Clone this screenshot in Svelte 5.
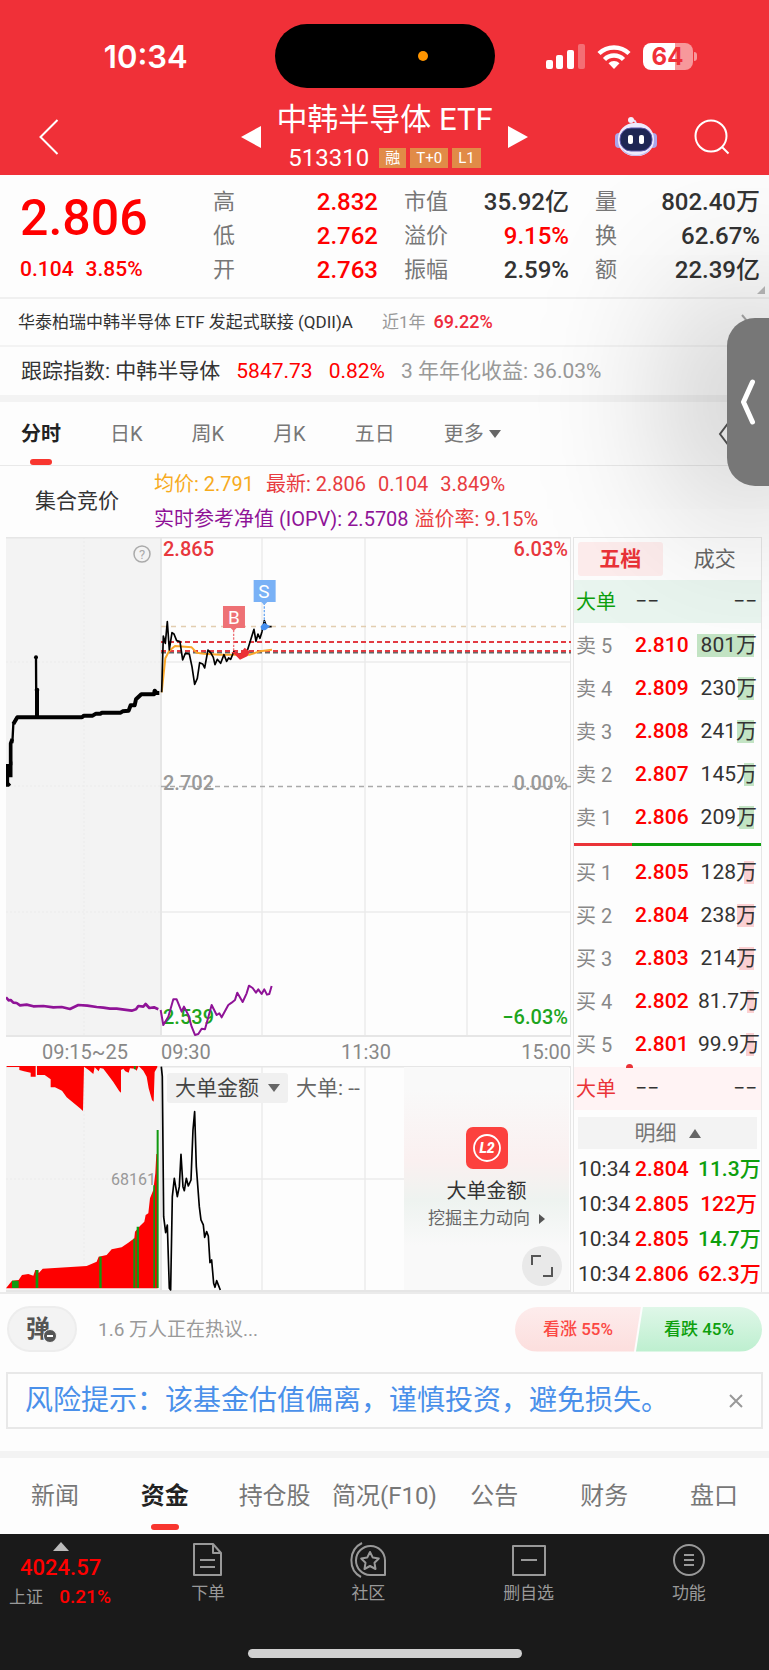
<script>
  const stats = [
    ['高', '2.832', true], ['市值', '35.92亿', false], ['量', '802.40万', false],
    ['低', '2.762', true], ['溢价', '9.15%', true], ['换', '62.67%', false],
    ['开', '2.763', true], ['振幅', '2.59%', false], ['额', '22.39亿', false],
  ]

  const periods = ['分时', '日K', '周K', '月K', '五日']

  // label, price, amount, bar width in px
  const sells = [
    ['卖 5', '2.810', '801万', 57],
    ['卖 4', '2.809', '230万', 16],
    ['卖 3', '2.808', '241万', 17],
    ['卖 2', '2.807', '145万', 10],
    ['卖 1', '2.806', '209万', 15],
  ]
  const buys = [
    ['买 1', '2.805', '128万', 10],
    ['买 2', '2.804', '238万', 17],
    ['买 3', '2.803', '214万', 15],
    ['买 4', '2.802', '81.7万', 7],
    ['买 5', '2.801', '99.9万', 8],
  ]
  const trades = [
    ['10:34', '2.804', '11.3万', 'down'],
    ['10:34', '2.805', '122万', 'up'],
    ['10:34', '2.805', '14.7万', 'down'],
    ['10:34', '2.806', '62.3万', 'up'],
  ]

  const sections = ['新闻', '资金', '持仓股', '简况(F10)', '公告', '财务', '盘口']

  let period = $state('分时')
  let section = $state('资金')
  let book = $state('五档')
  let showRisk = $state(true)
</script>

<div class="page">
  <header>
    <div class="status">
      <span class="clock">10:34</span>
      <div class="island"><i></i></div>
      <div class="signals">
        <svg width="39" height="26" viewBox="0 0 39 26" fill="#fff" aria-hidden="true">
          <rect x="0" y="17" width="7" height="9" rx="2" />
          <rect x="10" y="12" width="7" height="14" rx="2" />
          <rect x="21" y="7" width="7" height="19" rx="2" />
          <rect x="32" y="1" width="7" height="25" rx="2" opacity=".3" />
        </svg>
        <svg width="34" height="25" viewBox="0 0 34 25" fill="none" stroke="#fff" stroke-width="4.5" aria-hidden="true">
          <path d="M2 9.500a21.500 21.500 0 0 1 30 0" />
          <path d="M7.500 15.500a13.500 13.500 0 0 1 19 0" />
          <path d="M17 25l-5.500-5.800a8 8 0 0 1 11 0z" fill="#fff" stroke="none" />
        </svg>
        <div class="battery"><span>64</span></div>
      </div>
    </div>
    <div class="titlebar">
      <button class="back" aria-label="返回">
        <svg width="20" height="36" viewBox="0 0 20 36" fill="none" stroke="#fff" stroke-width="2"><path d="M18.500 1L1.500 18l17 17" /></svg>
      </button>
      <div class="title">
        <button aria-label="上一个"><svg width="20" height="22" viewBox="0 0 20 22"><path d="M20 0v22L0 11z" fill="#fff" /></svg></button>
        <div class="names">
          <h1>中韩半导体 ETF</h1>
          <div class="code">513310 <em>融</em><em>T+0</em><em>L1</em></div>
        </div>
        <button aria-label="下一个"><svg width="20" height="22" viewBox="0 0 20 22"><path d="M0 0v22l20-11z" fill="#fff" /></svg></button>
      </div>
      <div class="tools">
        <button aria-label="助手">
          <svg width="44" height="40" viewBox="0 0 44 40">
            <path d="M22 8c0-4-2-5-4-5" fill="none" stroke="#e8dff5" stroke-width="2" />
            <circle cx="17" cy="3" r="3" fill="#f4eefc" />
            <rect x="1" y="16" width="8" height="15" rx="4" fill="#aaa6ea" />
            <rect x="35" y="16" width="8" height="15" rx="4" fill="#aaa6ea" />
            <rect x="4" y="6" width="36" height="33" rx="16" fill="#eeeafc" />
            <path d="M8 32c7 8 21 8 28 0c-2 9-26 9-28 0z" fill="#b9b3ee" />
            <rect x="6" y="11" width="32" height="23" rx="11" fill="#1e2653" stroke="#5a55a8" />
            <rect x="14" y="18" width="5" height="9" rx="2" fill="#fff" />
            <rect x="25" y="18" width="5" height="9" rx="2" fill="#fff" />
          </svg>
        </button>
        <button aria-label="搜索">
          <svg width="36" height="36" viewBox="0 0 36 36" fill="none" stroke="#fff" stroke-width="2"><circle cx="17" cy="17" r="15.500" /><path d="M28 28l6.500 6.500" /></svg>
        </button>
      </div>
    </div>
  </header>

  <main>
    <section class="quote">
      <div class="last">
        <strong>2.806</strong>
        <div><span>0.104</span><span>3.85%</span></div>
      </div>
      <dl>
        {#each stats as [label, value, up]}
          <div><dt>{label}</dt><dd class:up>{value}</dd></div>
        {/each}
      </dl>
      <i class="corner"></i>
    </section>

    <a class="fund" href="#fund">
      <span>华泰柏瑞中韩半导体 ETF 发起式联接 (QDII)A</span>
      <span class="muted">近1年</span>
      <span class="pct">69.22%</span>
      <svg width="8" height="16" viewBox="0 0 8 16" fill="none" stroke="#aaa" stroke-width="2"><path d="M1 1l6 7-6 7" /></svg>
    </a>

    <div class="index">
      <span>跟踪指数: 中韩半导体</span>
      <span class="up">5847.73</span>
      <span class="up">0.82%</span>
      <span class="muted">3 年年化收益: 36.03%</span>
    </div>

    <nav class="periods">
      {#each periods as p}
        <button class:active={period === p} onclick={() => (period = p)}>{p}</button>
      {/each}
      <button class="more">更多<i></i></button>
      <svg class="fold" width="14" height="26" viewBox="0 0 14 26" fill="none" stroke="#555" stroke-width="2"><path d="M12 1L3 13l9 12" /></svg>
    </nav>

    <div class="legend">
      <span class="auction">集合竞价</span>
      <div class="lines">
        <p><span class="avg">均价: 2.791</span><span>最新: 2.806</span><span>0.104</span><span>3.849%</span></p>
        <p class="second"><span class="iopv">实时参考净值 (IOPV): 2.5708</span><span>溢价率: 9.15%</span></p>
      </div>
    </div>

    <section class="market">
      <div class="charts">
        <svg class="price" viewBox="0 0 565 500">
          <rect x="0" y="0" width="155" height="500" fill="#f3f3f3" />
          <g fill="none" stroke="#ebebeb">
            <path d="M155 125H565M155 375H565M256 0V500M359 0V500M461 0V500" stroke-width="1.500" />
            <path d="M0 125H155M0 249H155M0 375H155M78 0V500" stroke-dasharray="2 2" />
            <path d="M0 .5H565V499H0M155 0V500" stroke="#e6e6e6" stroke-width="2" />
          </g>
          <g fill="none">
            <path d="M155 249.500H565" stroke="#aaa" stroke-width="1.500" stroke-dasharray="5 4" />
            <path d="M155 89.500H565" stroke="#e2cdb0" stroke-width="1.500" stroke-dasharray="5 5" />
            <path d="M155 115.500H565" stroke="#666" stroke-width="2" stroke-dasharray="5 3" />
            <path d="M155 105H565M155 114H565" stroke="#e23b42" stroke-width="2" stroke-dasharray="5 3" />
          </g>
          <g class="label">
            <text x="157" y="19" fill="#e8383d">2.865</text>
            <text x="562" y="19" fill="#e8383d" text-anchor="end">6.03%</text>
            <text x="157" y="253" fill="#999">2.702</text>
            <text x="562" y="253" fill="#999" text-anchor="end">0.00%</text>
            <text x="157" y="487" fill="#1ea51e">2.539</text>
            <text x="562" y="487" fill="#1ea51e" text-anchor="end">−6.03%</text>
          </g>
          <circle cx="136" cy="17" r="8" fill="none" stroke="#aaa" stroke-width="1.500" />
          <text x="136" y="22" fill="#aaa" font-size="13" text-anchor="middle">?</text>
          <!-- traces are plotted at three units per pixel -->
          <g transform="translate(-6 -7) scale(.3333)" fill="none" stroke="#000" stroke-linejoin="round">
            <path stroke-width="11" d="M22 770V702M32 742V640L37 627M32 700H38M24 765L30 760" />
            <path stroke-width="7" d="M37 640L40 582L50 562M108 382L109 562" />
            <path stroke-width="12" d="M111 480V562M40 582L52 562H246L252 557H278L288 551H302L306 548H362L368 544L386 542L392 526H404L408 508L424 493H462L464 482L470 489H478" />
            <circle cx="108" cy="382" r="6" fill="#000" stroke="none" />
            <circle cx="111" cy="480" r="7" fill="#000" stroke="none" />
            <path stroke="#f9a72b" stroke-width="6" d="M485 487L496 385L508 362L525 348L575 352L590 368L612 371L660 374L750 374L780 364L816 359" />
            <path stroke-width="5" d="M485 487L490 318L496 340L502 275L508 360L516 308L522 312L530 332L540 335L548 390L556 370L568 372L576 410L584 463L592 445L599 398L608 402L614 414L624 360L632 368L640 382L645 404L652 388L662 400L672 374L680 394L686 384L692 388L701 366L715 374L740 368L752 330L762 298L768 334L774 312L780 325L786 305L793 272L800 290H815" />
            <path d="M694 366l14 0l12 5l14-18l16 12l-8 14l-22 10l-14-14z" fill="#ec2f35" stroke="none" />
            <path d="M701 300V360" stroke="#ee7378" stroke-width="4" stroke-dasharray="7 4" />
            <path d="M793 218V275" stroke="#6fabf2" stroke-width="4" stroke-dasharray="7 4" />
            <path d="M793 278l17 11l-12 10q-16 6-16-10z" fill="#458ff0" stroke="none" />
            <path d="M669 228h66v66h-25l-9 9l-9-9h-23z" fill="#ee7175" stroke="none" />
            <path d="M761 150h66v66h-25l-9 9l-9-9h-23z" fill="#79b1f6" stroke="none" />
          </g>
          <text x="228" y="87" class="flag">B</text>
          <text x="258" y="61" class="flag">S</text>
          <g transform="translate(-6 423) scale(.3333)" fill="none" stroke="#8f1397" stroke-linejoin="round">
            <path stroke-width="8" d="M18 112L26 121L32 120L40 128L50 129L60 136L80 134L100 139L130 138L160 142L185 141L210 147L235 135L262 137L290 141L310 143L330 146L350 146L395 152L408 148L415 138L430 140L437 132L448 144L462 142L475 148" />
            <path stroke-width="6" d="M482 150L490 195L505 170L520 118L530 118L545 155L552 140L565 165L575 200L585 225L595 222L605 206L615 208L635 135L650 165L658 160L665 172L685 135L695 128L705 120L712 98L728 126L740 100L747 77L758 84L768 98L775 88L785 102L793 88L801 104L808 102L815 78" />
          </g>
        </svg>

        <div class="axis"><span>09:15~25</span><span>09:30</span><span>11:30</span><span>15:00</span></div>

        <div class="volume">
          <svg viewBox="0 0 565 226">
            <rect width="155" height="226" fill="#f3f3f3" />
            <g fill="none" stroke="#ebebeb">
              <path d="M155 113H400M256 0V226M359 0V226" stroke-width="1.500" />
              <path d="M0 113H155M78 0V226" stroke-dasharray="2 2" />
              <path d="M0 .5H565V225H0M155 0V226" stroke="#e6e6e6" stroke-width="2" />
            </g>
            <text x="105" y="119" font-size="16" fill="#999">68161</text>
            <g transform="translate(-6 -106) scale(.3333)">
              <path fill="#fe0000" d="M20 316H472V322L464 336L461 425L456 420L446 385L440 350L430 332L416 318L410 332L404 326L390 325L386 338L376 334L370 326L363 330V398L358 394L340 366L322 342L310 326L300 324L296 334L284 322L280 342L266 330L252 320L249 453L240 445L200 412L186 392L165 382L152 382V358L134 345L111 345V318H107V350H92V338L72 334L58 330V321H20Z" />
              <path fill="#fe0000" d="M18 985L36 962L56 960L66 945L85 942L100 947L106 930H115L116 940L128 926L260 918L290 905L296 890L320 885L335 868L365 862L385 848L403 835L405 815L420 798L433 785L437 765L445 760L450 715L460 690L466 640L469 582H473V985Z" />
              <path fill="#109a10" d="M36 962h20v22h-20zM107 930h8v54h-8zM298 890h7v94h-7zM400 836h6v148h-6zM410 800h7v184h-7zM460 676h5v308h-5zM470 510h6v474h-6zM402 316h5v12h-5z" />
              <path fill="none" stroke="#000" stroke-width="5" stroke-linejoin="round" d="M484 320L487 350L491 770L497 818L502 795L508 985L512 990L517 710L523 655L532 710L538 680L543 583L549 680L553 692L559 655L565 678L573 660L579 510L584 455L589 620L598 740L603 780L610 795L614 832L620 815L625 828L630 908L635 900L641 970L645 982L650 962L661 990" />
            </g>
          </svg>
          <div class="metric">
            <button>大单金额<i></i></button>
            <span>大单: --</span>
          </div>
          <a class="promo" href="#l2">
            <svg width="42" height="42" viewBox="0 0 42 42">
              <rect width="42" height="42" rx="7" fill="#fc413e" />
              <circle cx="21" cy="21" r="13" fill="none" stroke="#fff" stroke-width="1.800" />
              <text x="21" y="26" text-anchor="middle" fill="#fff" font-size="14" font-weight="900" font-style="italic">L2</text>
            </svg>
            <b>大单金额</b>
            <span>挖掘主力动向<i></i></span>
          </a>
          <button class="expand" aria-label="放大">
            <svg width="22" height="22" viewBox="0 0 22 22" fill="none" stroke="#555" stroke-width="2"><path d="M1 10V1h9M21 12v9h-9" /></svg>
          </button>
        </div>
      </div>

      <aside>
        <div class="booktabs">
          {#each ['五档', '成交'] as t}
            <button class:active={book === t} onclick={() => (book = t)}>{t}</button>
          {/each}
        </div>
        <div class="big green"><span>大单</span><span>−−</span><span>−−</span></div>
        <table class="levels">
          <tbody>
            {#each sells as [label, price, amount, width]}
              <tr><th scope="row">{label}</th><td class="up">{price}</td><td class="amount"><i style:width="{width}px"></i><span>{amount}</span></td></tr>
            {/each}
          </tbody>
        </table>
        <div class="ratio"></div>
        <table class="levels buy">
          <tbody>
            {#each buys as [label, price, amount, width]}
              <tr><th scope="row">{label}</th><td class="up">{price}</td><td class="amount"><i style:width="{width}px"></i><span>{amount}</span></td></tr>
            {/each}
          </tbody>
        </table>
        <div class="big red"><i class="dot"></i><span>大单</span><span>−−</span><span>−−</span></div>
        <button class="detail">明细<i></i></button>
        <table class="trades">
          <tbody>
            {#each trades as [time, price, amount, dir]}
              <tr><td>{time}</td><td class="up">{price}</td><td class={dir}>{amount}</td></tr>
            {/each}
          </tbody>
        </table>
      </aside>
    </section>

    <section class="talk">
      <button class="danmu">弹<i></i></button>
      <a href="#talk">1.6 万人正在热议...</a>
      <div class="vote">
        <button class="bull">看涨 55%</button>
        <button class="bear">看跌 45%</button>
      </div>
    </section>

    {#if showRisk}
      <div class="risk">
        <span>风险提示：该基金估值偏离，谨慎投资，避免损失。</span>
        <button aria-label="关闭" onclick={() => (showRisk = false)}>
          <svg width="14" height="14" viewBox="0 0 14 14" stroke="#999" stroke-width="2"><path d="M1 1l12 12M13 1L1 13" /></svg>
        </button>
      </div>
    {/if}

    <nav class="sections">
      {#each sections as s}
        <button class:active={section === s} onclick={() => (section = s)}>{s}</button>
      {/each}
    </nav>

    <button class="handle" aria-label="展开侧栏">
      <svg width="16" height="46" viewBox="0 0 16 46" fill="none" stroke="#fff" stroke-width="5" stroke-linecap="round" stroke-linejoin="round"><path d="M12.500 3L3.500 23l9 20" /></svg>
    </button>
  </main>

  <footer>
    <div class="bar">
      <a class="sse" href="#sse">
        <i></i>
        <b>4024.57</b>
        <span>上证 <em>0.21%</em></span>
      </a>
      <a href="#order">
        <svg width="36" height="36" viewBox="0 0 36 36"><path d="M4 2h19l8 9v22H4zM23 2v9h8M10 18h15M10 25h15" /></svg>
        下单
      </a>
      <a href="#community">
        <svg width="36" height="36" viewBox="0 0 36 36"><path d="M35 33H20a14.500 14.500 0 1 1 15-14.500zM12 1C-2 8-2 28 11 35M20 10l2.800 5.600 6 .9-4.300 4.300 1 6.200-5.500-3-5.500 3 1-6.200-4.300-4.300 6-.9z" /></svg>
        社区
      </a>
      <a href="#remove">
        <svg width="36" height="36" viewBox="0 0 36 36"><path d="M2 4h32v29H2zM10 18h16" /></svg>
        删自选
      </a>
      <a href="#features">
        <svg width="36" height="36" viewBox="0 0 36 36"><circle cx="18" cy="18" r="15" /><path d="M13 13h10M13 18h10M13 23h10" /></svg>
        功能
      </a>
    </div>
    <div class="home"></div>
  </footer>
</div>

<style>
  :global(body) {
    margin: 0;
    background: #fdfdfd;
  }

  .page {
    font-family: Roboto, "Noto Sans CJK SC", sans-serif;
    font-size: 20px;
    line-height: 1;
    color: #333;
    overflow: hidden;
  }

  button {
    padding: 0;
    border: 0;
    background: none;
    font: inherit;
    color: inherit;
    cursor: pointer;
  }

  a {
    color: inherit;
    text-decoration: none;
  }

  svg {
    display: block;
  }

  em {
    font-style: normal;
  }

  h1, p, dl, dd {
    margin: 0;
  }

  .up, .pct {
    color: #f00;
  }

  .down {
    color: #0d9f0d;
  }

  .muted {
    color: #999;
  }

  /* header */
  header {
    position: relative;
    z-index: 2;
    height: 175px;
    background: #f03038;
    color: #fff;
  }

  .status {
    display: grid;
    grid-template-columns: 1fr 220px 1fr;
    align-items: center;
    padding-top: 24px;
  }

  .clock {
    padding-left: 17px;
    text-align: center;
    font: 600 31px/1 Inter, sans-serif;
  }

  .island {
    display: flex;
    align-items: center;
    justify-content: flex-end;
    height: 64px;
    border-radius: 32px;
    background: #000;
  }

  .island i {
    width: 10px;
    height: 10px;
    margin-right: 67px;
    border-radius: 50%;
    background: #ff9500;
  }

  .signals {
    display: flex;
    align-items: center;
    gap: 12px;
    padding-left: 51px;
  }

  .battery {
    position: relative;
    width: 50px;
    height: 27px;
    border-radius: 8px;
    background: linear-gradient(90deg, #fff 64%, #f7989b 64%);
    color: #f03038;
    font: 700 24px/27px Inter, sans-serif;
    text-align: center;
  }

  .battery::after {
    content: '';
    position: absolute;
    top: 9px;
    right: -4px;
    width: 3px;
    height: 9px;
    border-radius: 0 3px 3px 0;
    background: #f7989b;
  }

  .titlebar {
    display: grid;
    grid-template-columns: 1fr auto 1fr;
    align-items: center;
    height: 84px;
    padding: 0 39px;
  }

  .back {
    justify-self: start;
    padding-top: 12px;
  }

  .title {
    display: flex;
    align-items: center;
    gap: 15px;
  }

  .title button {
    padding-top: 12px;
  }

  h1 {
    font-size: 31px;
    font-weight: 400;
    line-height: 44px;
  }

  .names {
    padding-top: 10px;
    text-align: center;
  }

  .code {
    display: flex;
    align-items: center;
    justify-content: center;
    gap: 4px;
    font-size: 24px;
    line-height: 32px;
  }

  .code em {
    padding: 0 6px;
    background: #e18b47;
    font-size: 15px;
    line-height: 20px;
  }

  .code em:first-of-type {
    margin-left: 6px;
  }

  .tools {
    display: flex;
    align-items: center;
    justify-self: end;
    gap: 36px;
    padding-top: 12px;
  }

  /* quote */
  main {
    position: relative;
  }

  .quote {
    position: relative;
    display: flex;
    justify-content: space-between;
    height: 122px;
    border-bottom: 2px solid #f0f0f0;
    font-weight: 500;
  }

  .last {
    padding: 12px 0 0 20px;
    color: #f00;
  }

  .last strong {
    display: block;
    font-size: 50px;
    font-weight: 500;
    line-height: 62px;
  }

  .last div {
    display: flex;
    gap: 12px;
    font-size: 21px;
    line-height: 40px;
  }

  dl {
    display: grid;
    grid-template-columns: 165px 165px 165px;
    column-gap: 26px;
    align-content: start;
    padding: 10px 9px 0 0;
  }

  dl div {
    display: flex;
    justify-content: space-between;
    line-height: 34px;
  }

  dt {
    color: #777;
    font-size: 22px;
    font-weight: 400;
  }

  dd {
    font-size: 24px;
  }

  .corner {
    position: absolute;
    right: 4px;
    bottom: 3px;
    border: 4px solid #bbb;
    border-top-color: transparent;
    border-left-color: transparent;
  }

  .fund {
    display: flex;
    align-items: center;
    height: 46px;
    padding: 0 20px 0 18px;
    border-bottom: 2px solid #f3f3f3;
    font-size: 17px;
  }

  .fund .muted {
    margin: 0 8px 0 29px;
  }

  .fund .pct {
    color: #ee2b3b;
    font-size: 18px;
    font-weight: 500;
  }

  .fund svg {
    margin-left: auto;
  }

  .index {
    display: flex;
    align-items: center;
    gap: 16px;
    height: 48px;
    padding-left: 21px;
    border-bottom: 7px solid #f3f3f3;
    font-size: 21px;
  }

  /* period tabs */
  .periods {
    display: flex;
    align-items: stretch;
    gap: 49px;
    height: 63px;
    padding-left: 21px;
    border-bottom: 1px solid #e9e9e9;
    color: #777;
  }

  .periods button, .sections button {
    position: relative;
  }

  .active {
    font-weight: 700;
  }

  .periods .active, .sections .active {
    color: #222;
  }

  .periods .active::after, .sections .active::after {
    content: '';
    position: absolute;
    left: calc(50% - 11px);
    bottom: 0;
    width: 22px;
    height: 6px;
    border-radius: 3px;
    background: #f8362f;
  }

  .more {
    display: flex;
    align-items: center;
    gap: 5px;
  }

  .more i, .metric i {
    border: 6px solid transparent;
    border-top: 8px solid #666;
    border-bottom: 0;
  }

  .fold {
    align-self: center;
    margin: 0 38px 0 auto;
  }

  .legend {
    display: flex;
    align-items: center;
    height: 71px;
  }

  .auction {
    flex: 0 0 119px;
    padding-left: 35px;
    font-size: 21px;
  }

  .lines p {
    display: flex;
    gap: 12px;
    line-height: 35px;
    color: #e83c40;
  }

  .lines .second {
    gap: 6px;
  }

  .avg {
    color: #f7ab1d;
  }

  .lines .iopv {
    color: #8f1397;
  }

  /* charts and order book */
  .market {
    display: grid;
    grid-template-columns: 1fr 189px;
    gap: 2px;
    padding: 0 7px 0 6px;
    border-bottom: 2px solid #ebebeb;
  }

  .market svg text {
    font-family: Roboto, sans-serif;
  }

  .price .label text {
    font-size: 20px;
    font-weight: 500;
  }

  .price .flag {
    fill: #fff;
    font-size: 19px;
    text-anchor: middle;
  }

  .axis {
    display: grid;
    grid-template-columns: 155px 1fr 1fr 1fr;
    align-items: center;
    height: 29px;
    color: #888;
  }

  .axis span:first-child {
    padding-left: 36px;
  }

  .axis span:nth-child(3) {
    text-align: center;
  }

  .axis span:last-child {
    text-align: right;
  }

  .volume {
    position: relative;
  }

  .metric {
    position: absolute;
    top: 7px;
    left: 161px;
    display: flex;
    align-items: center;
    gap: 8px;
    font-size: 21px;
    color: #666;
  }

  .metric button {
    display: flex;
    align-items: center;
    gap: 9px;
    padding: 0 8px;
    border-radius: 3px;
    background: #f0f0f0;
    color: #444;
    line-height: 30px;
  }

  .promo {
    position: absolute;
    top: 1px;
    right: 2px;
    bottom: 2px;
    display: flex;
    flex-direction: column;
    align-items: center;
    box-sizing: border-box;
    width: 165px;
    padding-top: 60px;
    background: linear-gradient(#f9f9f9 10%, #faf0f0 42%, #eef3f0 60%, #f9f9f9 80%);
    font-size: 17px;
    color: #666;
  }

  .promo b {
    margin: 12px 0 9px;
    font-size: 20px;
    font-weight: 400;
    color: #333;
  }

  .promo span {
    display: flex;
    align-items: center;
    gap: 9px;
  }

  .promo i {
    border: 5px solid transparent;
    border-left: 6px solid #555;
    border-right: 0;
  }

  .expand {
    position: absolute;
    right: 9px;
    bottom: 6px;
    display: grid;
    place-items: center;
    width: 40px;
    height: 40px;
    border-radius: 50%;
    background: #e9e9e9;
  }

  aside {
    box-sizing: border-box;
    border: solid #e6e6e6;
    border-width: 1px 1px 0;
    font-size: 21px;
  }

  .booktabs {
    display: grid;
    grid-template-columns: 1fr 1fr;
    gap: 10px;
    padding: 4px;
    line-height: 34px;
    color: #666;
  }

  .booktabs .active {
    border-radius: 3px;
    background: #fdecec;
    color: #ea3338;
  }

  .big {
    position: relative;
    display: grid;
    grid-template-columns: 59px 1fr auto;
    align-items: center;
    height: 43px;
    padding: 0 4px 0 2px;
  }

  .big span:nth-of-type(1) {
    font-size: 20px;
  }

  .big.green {
    background: #e9f5ef;
  }

  .big.green span:nth-of-type(1) {
    color: #0d9f0d;
  }

  .big.red {
    background: #fff3f4;
  }

  .big.red span:nth-of-type(1) {
    color: #ea3338;
  }

  .dot {
    position: absolute;
    top: -3px;
    left: 52px;
    width: 7px;
    height: 4px;
    border-radius: 4px 4px 0 0;
    background: #ea3338;
  }

  table {
    width: 100%;
    border-collapse: separate;
    border-spacing: 0;
    table-layout: fixed;
  }

  th, td {
    padding: 0;
    text-align: left;
    white-space: nowrap;
  }

  .levels tr {
    height: 43px;
  }

  .levels {
    padding: 1px 0;
  }

  th {
    box-sizing: border-box;
    width: 61px;
    padding-left: 2px;
    font-size: 20px;
    font-weight: 400;
    color: #888;
  }

  td:nth-child(2) {
    font-weight: 500;
  }

  td:last-child {
    padding-right: 4px;
    text-align: right;
  }

  .amount {
    position: relative;
  }

  .amount i {
    position: absolute;
    top: 10px;
    right: 7px;
    height: 23px;
    background: #c3e4c4;
  }

  .buy .amount i {
    background: #fbd0d2;
  }

  .amount span {
    position: relative;
  }

  .ratio {
    height: 3px;
    margin: 3px 0 4px;
    background: linear-gradient(90deg, #ea3338 31%, #0d9f0d 31%);
  }

  .detail {
    display: flex;
    align-items: center;
    justify-content: center;
    gap: 12px;
    width: calc(100% - 8px);
    height: 32px;
    margin: 7px 4px 3px;
    background: #f3f3f3;
    color: #777;
  }

  .detail i {
    border: 6px solid transparent;
    border-top: 0;
    border-bottom: 9px solid #666;
  }

  .trades tr {
    height: 35px;
  }

  .trades td:first-child {
    width: 57px;
    padding-left: 4px;
  }

  .trades td:last-child {
    font-weight: 500;
  }

  /* discussion */
  .talk {
    display: flex;
    align-items: center;
    padding: 12px 7px 20px;
    font-size: 19px;
    color: #999;
  }

  .danmu {
    position: relative;
    box-sizing: border-box;
    width: 70px;
    height: 46px;
    margin-right: 21px;
    padding-right: 8px;
    border: 2px solid #ededed;
    border-radius: 23px;
    background: #f3f3f3;
    font-size: 24px;
    font-weight: 700;
    color: #555;
  }

  .danmu i {
    position: absolute;
    right: 18px;
    bottom: 7px;
    width: 12px;
    height: 12px;
    border: 1px solid #f3f3f3;
    border-radius: 50%;
    background: linear-gradient(#fff, #fff) center / 6px 2px no-repeat, #555;
  }

  .vote {
    display: flex;
    margin-left: auto;
    font-size: 17px;
    font-weight: 500;
  }

  .vote button {
    width: 126px;
    height: 45px;
  }

  .bull {
    border-radius: 23px 0 0 23px;
    background: linear-gradient(#fdecec, #fcdedd);
    clip-path: polygon(0 0, 100% 0, 119px 100%, 0 100%);
    color: #fb4843;
  }

  .vote .bear {
    margin-left: -5px;
    border-radius: 0 23px 23px 0;
    background: linear-gradient(#dff7e8, #bdefcf);
    clip-path: polygon(7px 0, 100% 0, 100% 100%, 0 100%);
    color: #0d9f0d;
  }

  .risk {
    display: flex;
    align-items: center;
    justify-content: space-between;
    height: 53px;
    margin: 0 6px 22px;
    padding: 0 18px 0 17px;
    border: 2px solid #e8e8e8;
    font-size: 28px;
    color: #4a90ea;
  }

  .sections {
    display: grid;
    grid-template-columns: repeat(7, 1fr);
    height: 76px;
    border-top: 7px solid #f3f3f3;
    font-size: 24px;
    color: #777;
  }

  .sections button {
    white-space: nowrap;
  }

  .sections .active::after {
    left: calc(50% - 14px);
    bottom: 4px;
    width: 28px;
  }

  .handle {
    position: absolute;
    top: 143px;
    right: 0;
    display: grid;
    place-items: center;
    width: 42px;
    height: 168px;
    border-radius: 28px 0 0 28px;
    background: #777;
    box-shadow: 0 0 160px 20px rgba(0, 0, 0, 0.4);
  }

  /* bottom bar */
  footer {
    position: relative;
    height: 137px;
    background: #1a1a1a;
    color: #999;
  }

  .bar {
    display: grid;
    grid-template-columns: 128px 1fr 1fr 1fr 1fr;
  }

  .bar a {
    display: flex;
    flex-direction: column;
    align-items: center;
    gap: 7px;
    padding-top: 8px;
    font-size: 17px;
  }

  .bar svg {
    fill: none;
    stroke: #999;
    stroke-width: 2;
    stroke-linejoin: round;
  }

  .bar .sse {
    align-items: flex-start;
    gap: 6px;
    padding-left: 9px;
  }

  .sse i {
    margin-left: 44px;
    border: 8px solid transparent;
    border-top: 0;
    border-bottom: 9px solid #bbb;
  }

  .sse b {
    margin-left: 11px;
    font-size: 22px;
    font-weight: 500;
    color: #f00;
  }

  .sse em {
    margin-left: 12px;
    font-size: 19px;
    font-weight: 500;
    line-height: 24px;
    color: #f00;
  }

  .home {
    position: absolute;
    bottom: 13px;
    left: 50%;
    width: 274px;
    height: 9px;
    margin-left: -137px;
    border-radius: 5px;
    background: #d0d0d0;
  }
</style>
